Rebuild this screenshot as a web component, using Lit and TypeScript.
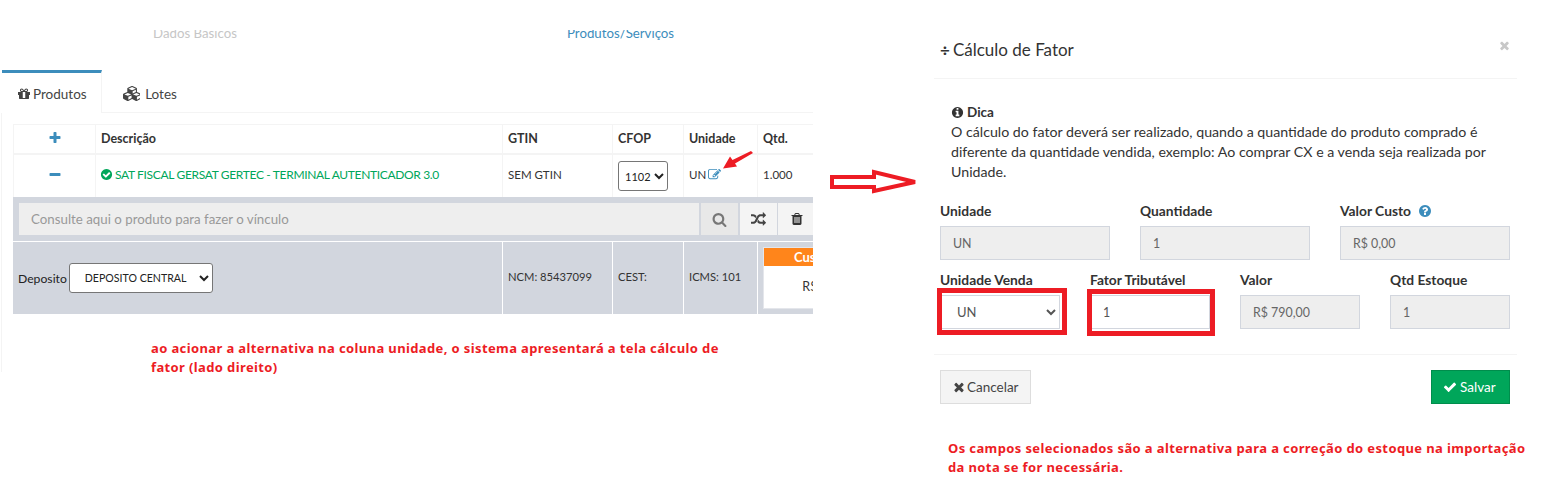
import { LitElement, html, css, svg } from "lit";
import { customElement } from "lit/decorators.js";

const P: Record<string, [string, string]> = {
  check: ["0 0 1792 1792", "M1671 566q0 40-28 68l-724 724-136 136q-28 28-68 28t-68-28l-136-136-362-362q-28-28-28-68t28-68l136-136q28-28 68-28t68 28l294 295 656-657q28-28 68-28t68 28l136 136q28 28 28 68z"],
  checkCircle: ["0 0 1792 1792", "M1412 734q0-28-18-46l-91-90q-19-19-45-19t-45 19l-408 407-226-226q-19-19-45-19t-45 19l-91 90q-18 18-18 46 0 27 18 45l362 362q19 19 45 19 27 0 46-19l543-543q18-18 18-45zm252 162q0 209-103 385.5t-279.5 279.5-385.5 103-385.5-103-279.5-279.5-103-385.5 103-385.5 279.5-279.5 385.5-103 385.5 103 279.5 279.5 103 385.5z"],
  search: ["0 0 1792 1792", "M1216 832q0-185-131.5-316.5t-316.5-131.5-316.5 131.5-131.5 316.5 131.5 316.5 316.5 131.5 316.5-131.5 131.5-316.5zm512 832q0 52-38 90t-90 38q-54 0-90-38l-343-342q-179 124-399 124-143 0-273.5-55.5t-225-150-150-225-55.5-273.5 55.5-273.5 150-225 225-150 273.5-55.5 273.5 55.5 225 150 150 225 55.5 273.5q0 220-124 399l343 343q37 37 37 90z"],
  times: ["0 0 1792 1792", "M1490 1322q0 40-28 68l-136 136q-28 28-68 28t-68-28l-294-294-294 294q-28 28-68 28t-68-28l-136-136q-28-28-28-68t28-68l294-294-294-294q-28-28-28-68t28-68l136-136q28-28 68-28t68 28l294 294 294-294q28-28 68-28t68 28l136 136q28 28 28 68t-28 68l-294 294 294 294q28 28 28 68z"],
  info: ["0 0 1792 1792", "M1152 1376v-160q0-14-9-23t-23-9h-96v-512q0-14-9-23t-23-9h-320q-14 0-23 9t-9 23v160q0 14 9 23t23 9h96v320h-96q-14 0-23 9t-9 23v160q0 14 9 23t23 9h448q14 0 23-9t9-23zm-128-896v-160q0-14-9-23t-23-9h-192q-14 0-23 9t-9 23v160q0 14 9 23t23 9h192q14 0 23-9t9-23zm640 416q0 209-103 385.5t-279.5 279.5-385.5 103-385.5-103-279.5-279.5-103-385.5 103-385.5 279.5-279.5 385.5-103 385.5 103 279.5 279.5 103 385.5z"],
  question: ["0 0 1792 1792", "M1024 1376v-192q0-14-9-23t-23-9h-192q-14 0-23 9t-9 23v192q0 14 9 23t23 9h192q14 0 23-9t9-23zm256-672q0-88-55.5-163t-138.5-116-170-41q-243 0-371 213-15 24 8 42l132 100q7 6 19 6 16 0 25-12 53-68 86-92 34-24 86-24 48 0 85.5 26t37.5 59q0 38-20 61t-68 45q-63 28-115.5 86.5t-52.5 125.5v36q0 14 9 23t23 9h192q14 0 23-9t9-23q0-19 21.5-49.5t54.5-49.5q32-18 49-28.5t46-35 44.5-48 28-60.5 12.5-81zm384 192q0 209-103 385.5t-279.5 279.5-385.5 103-385.5-103-279.5-279.5-103-385.5 103-385.5 279.5-279.5 385.5-103 385.5 103 279.5 279.5 103 385.5z"],
  plus: ["0 0 1792 1792", "M1600 736v192q0 40-28 68t-68 28h-416v416q0 40-28 68t-68 28h-192q-40 0-68-28t-28-68v-416h-416q-40 0-68-28t-28-68v-192q0-40 28-68t68-28h416v-416q0-40 28-68t68-28h192q40 0 68 28t28 68v416h416q40 0 68 28t28 68z"],
  minus: ["0 0 1792 1792", "M1600 736v192q0 40-28 68t-68 28h-1216q-40 0-68-28t-28-68v-192q0-40 28-68t68-28h1216q40 0 68 28t28 68z"],
  trash: ["0 0 1792 1792", "M704 1376v-704q0-14-9-23t-23-9h-64q-14 0-23 9t-9 23v704q0 14 9 23t23 9h64q14 0 23-9t9-23zm256 0v-704q0-14-9-23t-23-9h-64q-14 0-23 9t-9 23v704q0 14 9 23t23 9h64q14 0 23-9t9-23zm256 0v-704q0-14-9-23t-23-9h-64q-14 0-23 9t-9 23v704q0 14 9 23t23 9h64q14 0 23-9t9-23zm-544-992h448l-48-117q-7-9-17-11h-317q-10 2-17 11zm928 32v64q0 14-9 23t-23 9h-96v948q0 83-47 143.5t-113 60.5h-832q-66 0-113-58.5t-47-141.5v-952h-96q-14 0-23-9t-9-23v-64q0-14 9-23t23-9h309l70-167q15-37 54-63t79-26h320q40 0 79 26t54 63l70 167h309q14 0 23 9t9 23z"],
  random: ["0 0 1792 1792", "M666 481q-60 92-137 273-22-45-37-72.5t-40.5-63.5-51-56.5-63-35-81.5-14.5h-224q-14 0-23-9t-9-23v-192q0-14 9-23t23-9h224q250 0 410 225zm1126 799q0 14-9 23l-320 320q-9 9-23 9-13 0-22.5-9.5t-9.5-22.5v-192q-32 0-85 .5t-81 1-73-1-71-5-64-10.5-63-18.5-58-28.5-59-40-55-53.5-56-69.5q59-93 136-273 22 45 37 72.5t40.5 63.5 51 56.5 63 35 81.5 14.5h256v-192q0-14 9-23t23-9q12 0 24 10l319 319q9 9 9 23zm0-896q0 14-9 23l-320 320q-9 9-23 9-13 0-22.5-9.5t-9.5-22.5v-192h-256q-48 0-87 15t-69 45-51 61.5-45 77.5q-32 62-78 171-29 66-49.5 111t-54 105-64 100-74 83-90 68.5-106.5 42-128 16.5h-224q-14 0-23-9t-9-23v-192q0-14 9-23t23-9h224q48 0 87-15t69-45 51-61.5 45-77.5q32-62 78-171 29-66 49.5-111t54-105 64-100 74-83 90-68.5 106.5-42 128-16.5h256v-192q0-14 9-23t23-9q12 0 24 10l319 319q9 9 9 23z"],
  edit: ["0 0 1792 1792", "M888 1184l116-116-152-152-116 116v56h96v96h56zm440-720q-16-16-33 1l-350 350q-17 17-1 33t33-1l350-350q17-17 1-33zm80 594v190q0 119-84.5 203.5t-203.5 84.5h-832q-119 0-203.5-84.5t-84.5-203.5v-832q0-119 84.5-203.5t203.5-84.5h832q63 0 117 25 15 7 18 23 3 17-9 29l-49 49q-14 14-32 8-23-6-45-6h-832q-66 0-113 47t-47 113v832q0 66 47 113t113 47h832q66 0 113-47t47-113v-126q0-13 9-22l64-64q15-15 35-7t20 29zm-96-738l288 288-672 672h-288v-288zm444 132l-92 92-288-288 92-92q28-28 68-28t68 28l152 152q28 28 28 68t-28 68z"],
  gift: ["0 0 1792 1792", "M1056 1356v-716h-320v716q0 25 18 38.5t46 13.5h192q28 0 46-13.5t18-38.5zm-456-844h195l-126-161q-26-31-69-31-40 0-68 28t-28 68 28 68 68 28zm688-96q0-40-28-68t-68-28q-43 0-69 31l-125 161h194q40 0 68-28t28-68zm376 256v320q0 14-9 23t-23 9h-96v416q0 40-28 68t-68 28h-1088q-40 0-68-28t-28-68v-416h-96q-14 0-23-9t-9-23v-320q0-14 9-23t23-9h440q-93 0-158.5-65.5t-65.5-158.5 65.5-158.5 158.5-65.5q107 0 168 77l128 165 128-165q61-77 168-77 93 0 158.5 65.5t65.5 158.5-65.5 158.5-158.5 65.5h440q14 0 23 9t9 23z"],
  cubes: ["0 0 2048 1792", "M640 1632l384-192v-314l-384 164v342zm-64-454l404-173-404-173-404 173zm1088 454l384-192v-314l-384 164v342zm-64-454l404-173-404-173-404 173zm-448-293l384-165v-266l-384 164v267zm-64-379l441-189-441-189-441 189zm1088 518v416q0 36-19 67t-52 47l-448 224q-25 14-57 14t-57-14l-448-224q-4-2-7-4-2 2-7 4l-448 224q-25 14-57 14t-57-14l-448-224q-33-16-52-47t-19-67v-416q0-38 21.5-70t56.5-48l434-186v-400q0-38 21.5-70t56.5-48l448-192q23-10 50-10t50 10l448 192q35 16 56.5 48t21.5 70v400l434 186q36 16 57 48t21 70z"],
};

const ic = (n: string, size: number, cls = "") => {
  const [vb, d] = P[n];
  const w = vb.startsWith("0 0 2048") ? (size * 2048) / 1792 : size;
  return html`<svg class="ic ${cls}" viewBox=${vb} width=${w} height=${size} fill="currentColor">${svg`<path d=${d}></path>`}</svg>`;
};

@customElement("app-root")
export class AppRoot extends LitElement {
  static styles = css`
    :host {
      display: flex;
      width: 1563px;
      height: 488px;
      overflow: hidden;
      background: #fff;
      font-family: "Lato", "Noto Sans", sans-serif;
      font-size: 13px;
      color: #333;
    }
    .ic { flex: none; display: block; }
    .left { position: relative; width: 813px; flex: none; overflow: hidden; padding-top: 30px; box-sizing: border-box; }
    .steps { height: 12px; overflow: hidden; font-size: 13.25px; line-height: 20px; }
    .steps div { display: flex; margin-top: -7px; }
    .steps .a { margin-left: 153px; width: 414px; color: #c6c6c6; }
    .steps .b { color: #3c8dbc; }
    .tabs { display: flex; margin-top: 28px; height: 43px; box-sizing: border-box; border-bottom: 1px solid #f4f4f4; margin-left: 2px; }
    .tab { display: flex; align-items: center; gap: 2px; padding: 4px 0 0 15px; font-size: 13.5px; color: #444; height: 43px; box-sizing: border-box; }
    .tab.on { width: 100px; border-top: 3px solid #3c8dbc; border-right: 1px solid #f4f4f4; background: #fff; padding-top: 1px; }
    .tab.two { margin-left: 4px; padding-left: 17px; gap: 5px; padding-top: 4px; }
    .pane { margin-left: 1px; border-left: 1px solid #f4f4f4; height: 259px; padding: 11px 0 0 11px; box-sizing: border-box; }
    .row { display: grid; grid-template-columns: 82px 407px 110px 71px 74px 56px; }
    .row > div { display: flex; align-items: center; padding-left: 5px; box-sizing: border-box; border-left: 1px solid #f4f4f4; font-size: 11.5px; }
    .head { height: 31px; box-sizing: border-box; border-top: 1px solid #f4f4f4; border-bottom: 2px solid #f4f4f4; }
    .row.head > div { font-weight: 700; color: #333; font-size: 12.5px; padding-bottom: 2px; }
    .body { height: 42px; }
    .row.body > div { padding-bottom: 3px; }
    .row > .ctr, .row.head > .ctr { justify-content: center; padding: 0 0 3px; color: #3c8dbc; }
    .row.body > .name { color: #00a65a; gap: 2px; font-size: 12px; letter-spacing: -0.33px; padding-left: 4px; }
    .row > .un { gap: 2px; }
    .un .ic { color: #3c8dbc; }
    .row.body > .pick { padding-bottom: 0; }
    .mini { font: 11px "Lato", sans-serif; width: 50px; height: 30px; background: #fff; color: #222; border: 1px solid #767676; border-radius: 3px; padding: 0 0 0 2px; }
    .search { display: flex; background: #d2d6de; height: 44px; padding: 6px 0 0 6px; box-sizing: border-box; gap: 2px; }
    .fake { width: 680px; flex: none; height: 32px; background: #eee; padding-left: 12px; display: flex; align-items: center; box-sizing: border-box; color: #999; font-size: 13.3px; }
    .sb { width: 37px; height: 32px; background: #e8e8e8; display: flex; align-items: center; justify-content: center; color: #777; flex: none; }
    .sb.l { background: #f4f4f4; color: #444; }
    .sb.tr { color: #333; width: 38px; margin-left: -1px; }
    .details { height: 73px; box-sizing: border-box; background: #d2d6de; border-top: 1px solid #fff; }
    .row.details > div { border-left: 1px solid #fff; padding-bottom: 4px; background: #d2d6de; font-size: 11.2px; }
    .row.details > .first { border-left: none; padding-left: 5px; color: #222; font-size: 12.2px; padding-bottom: 0; gap: 2px; grid-column: 1 / span 2; }
    .dep { font: 10.6px "Lato", sans-serif; width: 144px; height: 30px; padding: 0 0 0 11px; background: #fff; color: #222; border: 1px solid #767676; border-radius: 3px; }
    .row.details > .box { padding: 5px 0 5px 5px; display: block; overflow: visible; }
    .cost { width: 136px; height: 62px; background: #fff; border: 1px solid #e4e6eb; box-sizing: border-box; }
    .cost b { display: block; height: 18px; line-height: 18px; text-align: center; background: #ff851b; color: #fff; font-size: 13px; }
    .cost span { display: block; text-align: center; line-height: 42px; font-size: 12.5px; }
    .note { color: #ed1c24; font: 700 13px/19px "Noto Sans", sans-serif; letter-spacing: 0.38px; }
    .note.n1 { margin: 25px 0 0 138px; width: 580px; }
    .redarrow { position: absolute; left: 720px; top: 150px; }
    .mid { width: 121px; flex: none; padding: 168px 0 0 17px; box-sizing: border-box; }
    .right { width: 629px; flex: none; box-sizing: border-box; }
    .modal { width: 583px; }
    .mh { height: 79px; box-sizing: border-box; border-bottom: 1px solid #f4f4f4; display: flex; padding: 37px 8px 0 6px; }
    .mh h4 { margin: 0; display: flex; align-items: center; height: 24px; font-size: 17px; font-weight: 400; color: #333; gap: 3px; }
    .mh h4 .div { font-weight: 700; }
    .close { margin-left: auto; color: #c8c8c8; margin-top: 2px; margin-right: -2px; }
    .tip { padding: 23px 0 0 17px; height: 122px; box-sizing: border-box; font-size: 14.2px; line-height: 20px; color: #333; }
    .tip b { display: flex; align-items: center; gap: 3px; font-size: 13.5px; }
    .tip p { margin: 0; white-space: nowrap; }
    .grid { display: flex; gap: 30px; padding-left: 6px; }
    label { display: block; font-weight: 700; font-size: 13.8px; line-height: 20px; height: 25px; color: #333; white-space: nowrap; }
    label.q { display: flex; gap: 7px; }
    label.q .ic { color: #3c8dbc; margin-top: 3px; }
    .in { height: 34px; box-sizing: border-box; border: 1px solid #d2d6de; background: #eee; padding-left: 12px; display: flex; align-items: center; color: #666; font-size: 12.4px; }
    .w170 { width: 170px; }
    .w120 { width: 120px; }
    .r2 { margin-top: 10px; height: 84px; }
    .in.white { background: #fff; color: #555; }
    .sel { font: 13px "Lato", sans-serif; background: #fff; color: #555; border: 1px solid #d2d6de; padding: 0 0 0 12px; width: 120px; height: 34px; box-sizing: border-box; display: block; }
    .hl { position: relative; height: 59px; }
    .hl::after { content: ""; position: absolute; left: -3px; right: -7px; top: 18px; bottom: -6px; border: 5px solid #ed1c24; pointer-events: none; }
    .hl.b::after { left: -3px; right: -5px; top: 19px; bottom: -7px; }
    .foot { border-top: 1px solid #f4f4f4; height: 51px; box-sizing: border-box; padding: 15px 7px 0 6px; display: flex; justify-content: space-between; }
    .btn { display: flex; align-items: center; gap: 3px; height: 34px; box-sizing: border-box; padding: 0 11px; font-size: 13.5px; }
    .cancel { width: 91px; background: #f4f4f4; border: 1px solid #ddd; color: #444; gap: 1px; }
    .save { width: 79px; background: #00a65a; border: 1px solid #008d4c; color: #fff; }
    .note.n2 { margin: 34px 0 0 14px; white-space: nowrap; }
  `;

  render() {
    return html`
      <section class="left">
        <div class="steps"><div><span class="a">Dados Básicos</span><span class="b">Produtos/Serviços</span></div></div>
        <nav class="tabs">
          <div class="tab on">${ic("gift", 14)}<span>Produtos</span></div>
          <div class="tab two">${ic("cubes", 15)}<span>Lotes</span></div>
        </nav>
        <div class="pane">
          <div class="row head">
            <div class="ctr">${ic("plus", 14)}</div><div>Descrição</div><div>GTIN</div><div>CFOP</div><div>Unidade</div><div>Qtd.</div>
          </div>
          <div class="row body">
            <div class="ctr">${ic("minus", 14)}</div>
            <div class="name">${ic("checkCircle", 13)}<span>SAT FISCAL GERSAT GERTEC - TERMINAL AUTENTICADOR 3.0</span></div>
            <div>SEM GTIN</div>
            <div class="pick"><select class="mini"><option>1102</option></select></div>
            <div class="un"><span>UN</span>${ic("edit", 13)}</div>
            <div>1.000</div>
          </div>
          <div class="search">
            <div class="fake">Consulte aqui o produto para fazer o vínculo</div>
            <div class="sb">${ic("search", 15)}</div>
            <div class="sb l">${ic("random", 15)}</div>
            <div class="sb l tr">${ic("trash", 14)}</div>
          </div>
          <div class="row details">
            <div class="first"><span>Deposito</span><select class="dep"><option>DEPOSITO CENTRAL</option></select></div>
            <div>NCM: 85437099</div><div>CEST:</div><div>ICMS: 101</div>
            <div class="box"><div class="cost"><b>Custo Médio</b><span>R$ 790,00</span></div></div>
          </div>
          <div class="note n1">ao acionar a alternativa na coluna unidade, o sistema apresentará a tela cálculo de fator (lado direito)</div>
        </div>
        <svg class="redarrow" width="36" height="22" viewBox="0 0 36 22" fill="#ed1c24"><path d="M31 1 L33 3 L15 13.500 L17 16.500 L3 18.500 L10 6.500 L12.500 10 Z"></path></svg>
      </section>
      <div class="mid">
        <svg width="92" height="28" viewBox="0 0 92 28"><path d="M2 9 L44 9 L44 4 L85 14 L44 23 L44 19 L2 19 Z" fill="#fff" stroke="#ed1c24" stroke-width="4"></path></svg>
      </div>
      <section class="right">
        <div class="modal">
          <header class="mh">
            <h4><span class="div">÷</span><span>Cálculo de Fator</span></h4>
            <span class="close">${ic("times", 13)}</span>
          </header>
          <div class="tip">
            <b>${ic("info", 13)}Dica</b>
            <p>O cálculo do fator deverá ser realizado, quando a quantidade do produto comprado é</p>
            <p>diferente da quantidade vendida, exemplo: Ao comprar CX e a venda seja realizada por</p>
            <p>Unidade.</p>
          </div>
          <div class="grid">
            <div class="w170"><label>Unidade</label><div class="in">UN</div></div>
            <div class="w170"><label>Quantidade</label><div class="in">1</div></div>
            <div class="w170"><label class="q">Valor Custo ${ic("question", 14)}</label><div class="in">R$ 0,00</div></div>
          </div>
          <div class="grid r2">
            <div class="w120 hl"><label>Unidade Venda</label><select class="sel"><option>UN</option></select></div>
            <div class="w120 hl b"><label>Fator Tributável</label><div class="in white">1</div></div>
            <div class="w120"><label>Valor</label><div class="in">R$ 790,00</div></div>
            <div class="w120"><label>Qtd Estoque</label><div class="in">1</div></div>
          </div>
          <footer class="foot">
            <div class="btn cancel">${ic("times", 14)}Cancelar</div>
            <div class="btn save">${ic("check", 14)}Salvar</div>
          </footer>
          <div class="note n2">Os campos selecionados são a alternativa para a correção do estoque na importação<br />da nota se for necessária.</div>
        </div>
      </section>
    `;
  }
}
